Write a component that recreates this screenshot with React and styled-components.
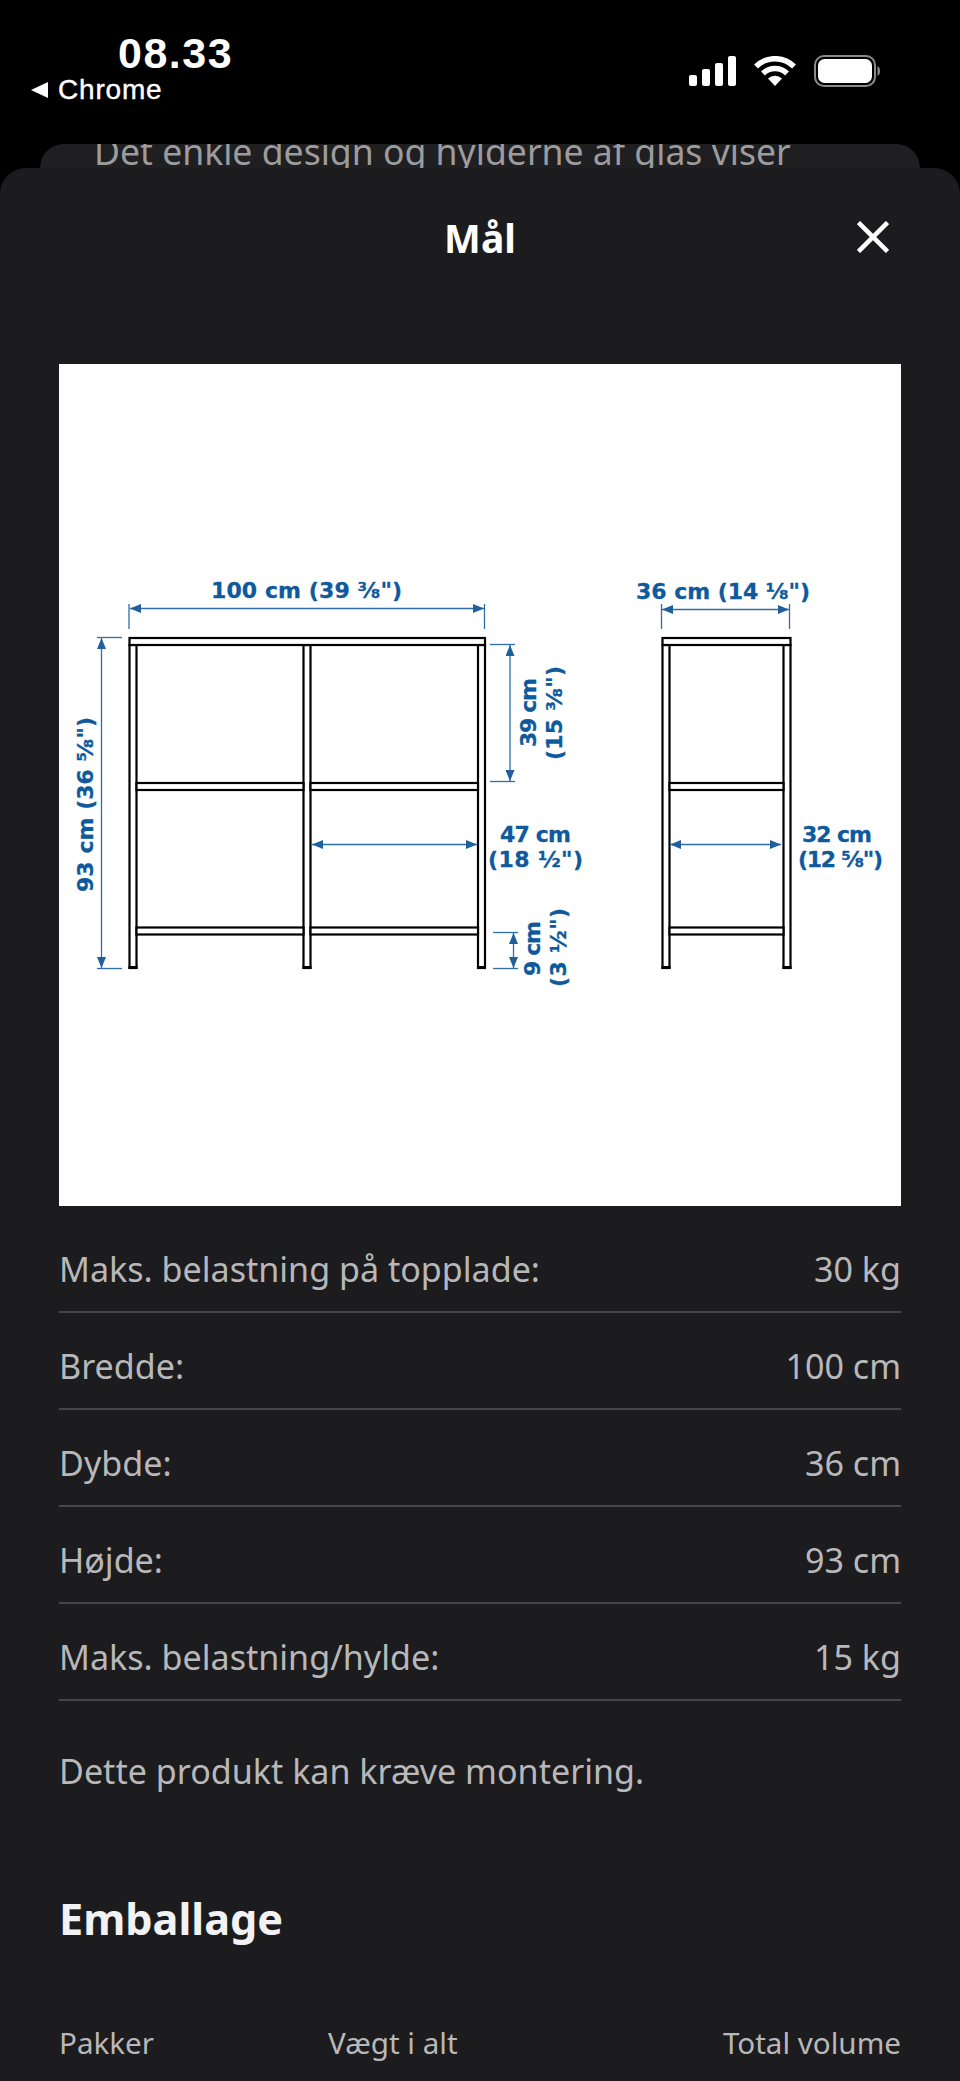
import React from 'react';
import styled, { createGlobalStyle } from 'styled-components';

const GlobalStyle = createGlobalStyle`
  html, body {
    margin: 0;
    padding: 0;
    background: #000;
  }
  * {
    box-sizing: border-box;
  }
`

const Screen = styled.div`
  width: 960px;
  height: 2081px;
  overflow: hidden;
  display: flex;
  flex-direction: column;
  background: #000;
  font-family: "Noto Sans", sans-serif;
`

const StatusBar = styled.div`
  height: 144px;
  padding: 27px 80px 0 31px;
  display: flex;
  justify-content: space-between;
  align-items: flex-start;
  color: #fff;
  font-family: "Liberation Sans", Arial, sans-serif;
`

const StatusLeft = styled.div`
  display: flex;
  flex-direction: column;
`

const Time = styled.div`
  margin-left: 87px;
  margin-bottom: -5px;
  font-size: 43px;
  line-height: 52px;
  font-weight: 700;
  letter-spacing: 1.5px;
`

const BackLink = styled.div`
  display: flex;
  align-items: center;
  gap: 10px;
  font-size: 28px;
  line-height: 32px;
  letter-spacing: 0.8px;
  -webkit-text-stroke: 0.4px #fff;
`

const BackArrow = styled.span`
  width: 0;
  height: 0;
  border-style: solid;
  border-width: 8px 17px 8px 0;
  border-color: transparent #fff transparent transparent;
`

const StatusIcons = styled.div`
  display: flex;
  align-items: center;
  gap: 18px;
  margin-top: 28px;
`

const BehindCard = styled.div`
  height: 24px;
  margin: 0 40px;
  padding-left: 54px;
  overflow: hidden;
  background: #1f1f21;
  border-radius: 24px 24px 0 0;
  color: #9c9c9e;
  font-size: 35.6px;
  line-height: 15px;
  white-space: nowrap;
`

const Sheet = styled.div`
  flex: 1;
  padding: 0 59px;
  background: #1c1c1e;
  border-radius: 26px 26px 0 0;
`

const SheetHeader = styled.div`
  height: 196px;
  padding-bottom: 58px;
  display: grid;
  grid-template-columns: 1fr auto 1fr;
  align-items: center;
`

const SheetTitle = styled.h1`
  margin: 0;
  grid-column: 2;
  color: #fff;
  font-size: 39px;
  font-weight: 700;
`

const CloseIcon = styled.svg`
  justify-self: end;
  margin-right: 12px;
`

const Diagram = styled.svg`
  display: block;
  width: 842px;
  height: 842px;
  background: #fff;
  margin-bottom: 10px;
`

const FrameRect = styled.rect`
  fill: #fff;
  stroke: #000;
  stroke-width: 2.2;
`

const LegFoot = styled.rect`
  fill: #000;
`

const DimLine = styled.line`
  stroke: #2f6ea8;
  stroke-width: 1.3;
`

const DimText = styled.text`
  fill: #0f5a9c;
  stroke: #0f5a9c;
  stroke-width: 0.3;
  font-family: "DejaVu Sans", Verdana, sans-serif;
  font-weight: 700;
  font-size: 22px;
`

const SpecRow = styled.div`
  height: 97px;
  padding-top: 10px;
  display: flex;
  justify-content: space-between;
  align-items: center;
  border-bottom: 2px solid #464648;
  color: #b8b8ba;
  font-size: 34.1px;
`

const Note = styled.p`
  margin: 43px 0 0;
  color: #b8b8ba;
  font-size: 34.1px;
  line-height: 54px;
`

const SectionTitle = styled.h2`
  margin: 91px 0 0;
  color: #f2f2f4;
  font-size: 43.2px;
  line-height: 60px;
  font-weight: 700;
`

const PackageHead = styled.div`
  margin-top: 73px;
  display: grid;
  grid-template-columns: 269px 1fr auto;
  color: #b8b8ba;
  font-size: 29.6px;
  line-height: 42px;
`

const specs = [
  ['Maks. belastning på topplade:', '30 kg'],
  ['Bredde:', '100 cm'],
  ['Dybde:', '36 cm'],
  ['Højde:', '93 cm'],
  ['Maks. belastning/hylde:', '15 kg'],
]

const Dim = ({ x1, y1, x2, y2 }) => (
  <DimLine x1={x1} y1={y1} x2={x2} y2={y2} markerStart="url(#head)" markerEnd="url(#head)" />
)

const Tick = (props) => <DimLine {...props} />

// rotated label, reads bottom to top
const SideText = ({ x, y, children, len }) => (
  <DimText transform={`rotate(-90 ${x} ${y})`} x={x} y={y} textLength={len}>{children}</DimText>
)

const footXs = [128.5, 302.5, 477, 661.5, 782.5]

const ShelfDrawing = () => (
  <Diagram viewBox="59 364 842 842">
    <defs>
      <marker id="head" viewBox="0 0 11 9" refX="11" refY="4.5" markerUnits="userSpaceOnUse" markerWidth="11" markerHeight="9" orient="auto-start-reverse">
        <path d="M0 0 L11 4.5 L0 9 Z" fill="#1f609c" />
      </marker>
    </defs>

    {/* front view */}
    <FrameRect x="129.5" y="645" width="7" height="323" />
    <FrameRect x="303.5" y="645" width="7" height="323" />
    <FrameRect x="478" y="645" width="7" height="323" />
    <FrameRect x="129.5" y="638" width="355.5" height="7" />
    <FrameRect x="136.5" y="783" width="167" height="7" />
    <FrameRect x="310.5" y="783" width="167.5" height="7" />
    <FrameRect x="136.5" y="927.5" width="167" height="7" />
    <FrameRect x="310.5" y="927.5" width="167.5" height="7" />

    {/* side view */}
    <FrameRect x="662.5" y="645" width="7" height="323" />
    <FrameRect x="783.5" y="645" width="7" height="323" />
    <FrameRect x="662.5" y="638" width="128" height="7" />
    <FrameRect x="669.5" y="783" width="114" height="7" />
    <FrameRect x="669.5" y="927.5" width="114" height="7" />

    {footXs.map((x) => <LegFoot key={x} x={x} y="966" width="9" height="3" />)}

    <Dim x1="130" y1="608.5" x2="484" y2="608.5" />
    <Tick x1="129" y1="604" x2="129" y2="629" />
    <Tick x1="484.5" y1="604" x2="484.5" y2="629" />
    <DimText x="211" y="598" textLength="191">100 cm (39 ⅜")</DimText>

    <Dim x1="101.5" y1="638" x2="101.5" y2="968" />
    <Tick x1="97" y1="637.5" x2="122" y2="637.5" />
    <Tick x1="97" y1="968.5" x2="122" y2="968.5" />
    <SideText x="93" y="892" len="175">93 cm (36 ⅝")</SideText>

    <Dim x1="510" y1="645" x2="510" y2="781" />
    <Tick x1="490" y1="644.5" x2="515" y2="644.5" />
    <Tick x1="490" y1="781.5" x2="515" y2="781.5" />
    <SideText x="536" y="747" len="69">39 cm</SideText>
    <SideText x="562" y="760" len="94">(15 ⅜")</SideText>

    <Dim x1="312" y1="844.5" x2="477" y2="844.5" />
    <DimText x="500" y="842" textLength="71">47 cm</DimText>
    <DimText x="488" y="867" textLength="95">(18 ½")</DimText>

    <Dim x1="513.5" y1="933" x2="513.5" y2="968" />
    <Tick x1="493" y1="932.5" x2="518" y2="932.5" />
    <Tick x1="493" y1="968.5" x2="518" y2="968.5" />
    <SideText x="540" y="976" len="55">9 cm</SideText>
    <SideText x="566" y="987" len="79">(3 ½")</SideText>

    <Dim x1="662" y1="609.5" x2="789" y2="609.5" />
    <Tick x1="661.5" y1="604" x2="661.5" y2="629" />
    <Tick x1="789.5" y1="604" x2="789.5" y2="629" />
    <DimText x="636" y="599" textLength="174">36 cm (14 ⅛")</DimText>

    <Dim x1="670" y1="844.5" x2="781" y2="844.5" />
    <DimText x="802" y="842" textLength="70">32 cm</DimText>
    <DimText x="798" y="867" textLength="85">(12 ⅝")</DimText>
  </Diagram>
)

const SignalIcon = () => (
  <svg width="47" height="30" viewBox="0 0 47 30" fill="#fff">
    <rect x="0" y="19" width="8" height="11" rx="2" />
    <rect x="13" y="13" width="8" height="17" rx="2" />
    <rect x="26" y="7" width="8" height="23" rx="2" />
    <rect x="39" y="0" width="8" height="30" rx="2" />
  </svg>
)

const WifiIcon = () => (
  <svg width="42" height="30" viewBox="0 0 42 30" fill="none" stroke="#fff" strokeWidth="5.5">
    <path d="M2 10.5 A27 27 0 0 1 40 10.5" />
    <path d="M9 17.5 A17 17 0 0 1 33 17.5" />
    <path d="M21 30 L14 22.5 A10 10 0 0 1 28 22.5 Z" fill="#fff" stroke="none" />
  </svg>
)

const BatteryIcon = () => (
  <svg width="66" height="32" viewBox="0 0 66 32">
    <rect x="1" y="1" width="60" height="30" rx="9" fill="none" stroke="#8a8a8a" strokeWidth="2" />
    <rect x="4" y="4" width="54" height="24" rx="6.5" fill="#fff" />
    <path d="M63.5 11 C65.5 12 66 14 66 16 C66 18 65.5 20 63.5 21 Z" fill="#8a8a8a" />
  </svg>
)

const App = () => {
  return (
    <Screen>
      <GlobalStyle />
      <StatusBar>
        <StatusLeft>
          <Time>08.33</Time>
          <BackLink><BackArrow />Chrome</BackLink>
        </StatusLeft>
        <StatusIcons>
          <SignalIcon />
          <WifiIcon />
          <BatteryIcon />
        </StatusIcons>
      </StatusBar>
      <BehindCard>Det enkle design og hylderne af glas viser</BehindCard>
      <Sheet>
        <SheetHeader>
          <SheetTitle>Mål</SheetTitle>
          <CloseIcon width="32" height="32" viewBox="0 0 32 32" stroke="#fff" strokeWidth="4.5">
            <line x1="1.5" y1="1.5" x2="30.5" y2="30.5" />
            <line x1="30.5" y1="1.5" x2="1.5" y2="30.5" />
          </CloseIcon>
        </SheetHeader>
        <ShelfDrawing />
        {specs.map(([label, value]) => (
          <SpecRow key={label}>
            <span>{label}</span>
            <span>{value}</span>
          </SpecRow>
        ))}
        <Note>Dette produkt kan kræve montering.</Note>
        <SectionTitle>Emballage</SectionTitle>
        <PackageHead>
          <span>Pakker</span>
          <span>Vægt i alt</span>
          <span>Total volume</span>
        </PackageHead>
      </Sheet>
    </Screen>
  )
}

export default App;
